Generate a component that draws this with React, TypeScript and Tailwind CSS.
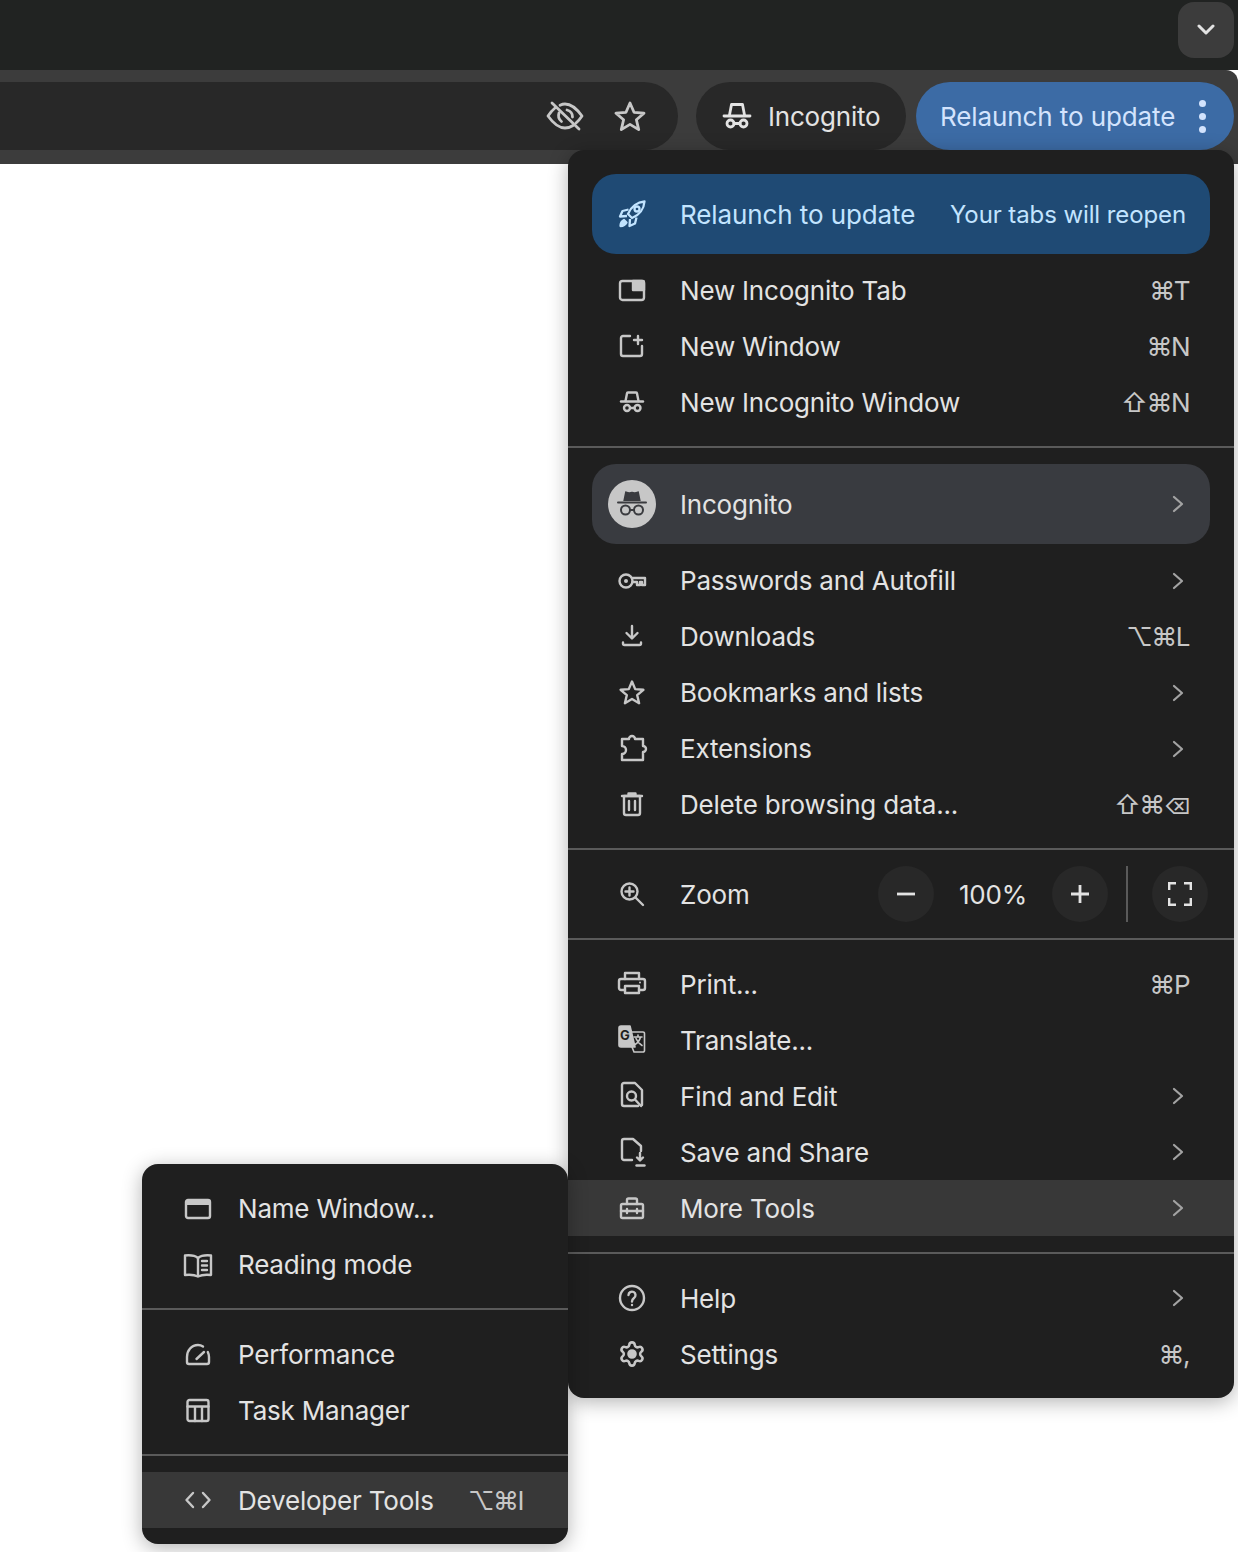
import React from 'react';
import { Settings } from 'lucide-react';

// All menu icons share a 28px box, 1 unit = 1 screenshot pixel
const Ico: React.FC<{ children: React.ReactNode; sw?: number }> = ({ children, sw = 2.4 }) => (
  <svg
    width="28"
    height="28"
    viewBox="0 0 28 28"
    fill="none"
    stroke="#c7c7c7"
    strokeWidth={sw}
    strokeLinecap="round"
    strokeLinejoin="round"
    className="shrink-0 overflow-visible"
  >
    {children}
  </svg>
);

const Chevron: React.FC<{ className?: string }> = ({ className }) => (
  <svg width="12" height="18" viewBox="0 0 12 18" fill="none" stroke="#a3a3a3" strokeWidth="2.200" strokeLinecap="round" strokeLinejoin="round" className={className}>
    <path d="M2 2l8 7-8 7" />
  </svg>
);

const icons: Record<string, React.ReactNode> = {
  newTab: (
    <Ico>
      <rect x="2" y="4" width="24" height="19" rx="2.500" />
      <path d="M15 4h10a1 1 0 0 1 1 1v8H15z" fill="#c7c7c7" />
    </Ico>
  ),
  newWindow: (
    <Ico>
      <path d="M12 3H5a2 2 0 0 0-2 2v16a2 2 0 0 0 2 2h17a2 2 0 0 0 2-2v-8" />
      <path d="M20 3v8M16 7h8" />
    </Ico>
  ),
  incognito: (
    <Ico>
      <path d="M7.500 12 9 4.500a1 1 0 0 1 1-1h8a1 1 0 0 1 1 1L20.500 12" />
      <path d="M3 12.500h22" />
      <circle cx="9" cy="19" r="3" />
      <circle cx="19.500" cy="19" r="3" />
      <path d="M12 19h4.500" />
    </Ico>
  ),
  key: (
    <Ico>
      <circle cx="8" cy="14" r="6.500" />
      <circle cx="8" cy="14" r="2" fill="#c7c7c7" stroke="none" />
      <path d="M14.500 11H27v7h-3v-3h-2v3h-3v-3h-4.500" />
    </Ico>
  ),
  download: (
    <Ico>
      <path d="M14 3v12M8.500 10l5.500 5.500 5.500-5.500" />
      <path d="M5 19.500v1a1.500 1.500 0 0 0 1.500 1.500h15a1.500 1.500 0 0 0 1.500-1.500v-1" />
    </Ico>
  ),
  star: (
    <Ico>
      <path d="M14 2.500l3.200 7.600 8.200.7-6.200 5.400 1.900 8-7.100-4.200-7.100 4.200 1.900-8-6.200-5.400 8.200-.7z" />
    </Ico>
  ),
  puzzle: (
    <Ico>
      <path d="M4 4h7a3 3 0 0 1 6 0h8v7a3 3 0 0 1 0 6v8H4v-6a4 4 0 0 0 0-8z" />
    </Ico>
  ),
  trash: (
    <Ico>
      <path d="M4 5h20M10.500 5V2.500h7V5" />
      <path d="M6 5v17a2 2 0 0 0 2 2h12a2 2 0 0 0 2-2V5z" />
      <path d="M11 10v9M17 10v9" />
    </Ico>
  ),
  zoom: (
    <Ico>
      <circle cx="11.500" cy="11.500" r="8" />
      <path d="M17.500 17.500 25 25M7.500 11.500h8M11.500 7.500v8" />
    </Ico>
  ),
  print: (
    <Ico>
      <path d="M7 9V3h14v6" />
      <path d="M7 20H3a2 2 0 0 1-2-2v-7a2 2 0 0 1 2-2h22a2 2 0 0 1 2 2v7a2 2 0 0 1-2 2h-4" />
      <path d="M7 16h14v7H7z" />
      <circle cx="22" cy="12.500" r="1" fill="#c7c7c7" stroke="none" />
    </Ico>
  ),
  translate: (
    <Ico sw={1.600}>
      <path d="M3 0h9l5 21H3a2 2 0 0 1-2-2V2a2 2 0 0 1 2-2z" fill="#c7c7c7" stroke="#c7c7c7" />
      <path d="M13 6h12a1.500 1.500 0 0 1 1.500 1.500V24.500A1.500 1.500 0 0 1 25 26H16l-2-5" />
      <text x="2" y="14" fontSize="13" fontWeight="700" fontFamily="Inter" fill="#1f1f1f" stroke="none">G</text>
      <path d="M16 11h8M20 9v2M22.500 11c-1 4-3 6-5.500 7.500M18 12.500c1 2.500 3 5 6 7" />
    </Ico>
  ),
  find: (
    <Ico>
      <path d="M24 23V8l-7-7H6a2 2 0 0 0-2 2v19a2 2 0 0 0 2 2h14" />
      <circle cx="13.500" cy="14" r="4.500" />
      <path d="M17 17.500l6 6.500" />
    </Ico>
  ),
  save: (
    <Ico>
      <path d="M14 22H6a2 2 0 0 1-2-2V3a2 2 0 0 1 2-2h9l8 7v5" />
      <path d="M22 15v7M19 19.500l3 3 3-3" />
      <path d="M18.500 27.500h8" />
    </Ico>
  ),
  tools: (
    <Ico>
      <path d="M9 10V6a1.500 1.500 0 0 1 1.500-1.500h7A1.500 1.500 0 0 1 19 6v4" />
      <rect x="3" y="10" width="22" height="14" rx="1.500" />
      <path d="M3 17h22M9 15v4M19 15v4" />
    </Ico>
  ),
  help: (
    <Ico>
      <circle cx="14" cy="14" r="12" />
      <path d="M10.500 11a3.500 3.500 0 1 1 5.500 3c-1.300 1-2 1.600-2 3.500" />
      <circle cx="14" cy="21" r="1.200" fill="#c7c7c7" stroke="none" />
    </Ico>
  ),
  window: (
    <Ico>
      <rect x="2" y="5" width="24" height="18" rx="2" />
      <path d="M2 8h24" strokeWidth="4" strokeLinecap="butt" />
    </Ico>
  ),
  book: (
    <Ico>
      <path d="M14 7C11 4.500 6 4 1 4.500V24c5-.5 10 0 13 1.500 3-1.500 8-2 13-1.500V4.500C22 4 17 4.500 14 7z" />
      <path d="M14 7v18M18 10h5M18 14.500h5M18 19h5" />
    </Ico>
  ),
  gauge: (
    <Ico>
      <path d="M19 5.500C17.500 4.500 15.800 4 14 4 7.500 4 3 9.500 3 16v5a2 2 0 0 0 2 2h18a2 2 0 0 0 2-2v-5c0-2-.5-3.500-1.200-5" />
      <path d="M12.500 18 20 11" />
    </Ico>
  ),
  table: (
    <Ico>
      <rect x="3.500" y="3" width="21" height="21" rx="2" />
      <path d="M3.500 9.500h21M11 9.500V24M18 9.500V24" />
    </Ico>
  ),
  code: (
    <Ico>
      <path d="M9 7l-6.500 7L9 21M19 7l6.500 7-6.500 7" />
    </Ico>
  ),
};

// low: rows on an even y sit one pixel lower in the screenshot (2x retina rounding)
type Item = { icon: React.ReactNode; label: string; keys?: React.ReactNode; sub?: boolean; on?: boolean; low?: boolean };

const Keys: React.FC<{ children: React.ReactNode; low?: boolean }> = ({ children, low }) => (
  <span className={`mr-[1px] tracking-[-1.5px] text-[#c7c7c7] ${low ? 'mt-[2px]' : ''}`}>{children}</span>
);

const Row: React.FC<Item> = ({ icon, label, keys, sub, on, low }) => (
  <div className={`flex h-14 items-center pl-[50px] pr-[44px] ${on ? 'bg-[#383838]' : ''}`}>
    {icon}
    <span className={`ml-[34px] flex-1 ${low ? 'mt-[2px]' : ''}`}>{label}</span>
    {keys && <Keys low={low}>{keys}</Keys>}
    {sub && <Chevron className="mr-[6px]" />}
  </div>
);

const SubRow: React.FC<Item> = ({ icon, label, keys, on, low }) => (
  <div className={`flex h-14 items-center pl-[42px] pr-[44px] ${on ? 'bg-[#383838]' : ''}`}>
    {icon}
    <span className={`ml-[26px] flex-1 ${low ? 'mt-[2px]' : ''}`}>{label}</span>
    {keys && <Keys low={low}>{keys}</Keys>}
  </div>
);

const Divider: React.FC<{ className?: string }> = ({ className }) => (
  <div className={`h-[2px] bg-[#5a5a5a] ${className ?? ''}`} />
);

const ZoomBtn: React.FC<{ children: React.ReactNode }> = ({ children }) => (
  <div className="flex h-14 w-14 items-center justify-center rounded-full bg-[#282828]">{children}</div>
);

export default function App() {
  return (
    <div className="relative h-[1552px] w-[1238px] overflow-hidden bg-white font-[Inter,'DejaVu_Sans',sans-serif] text-[26px] leading-[40px] font-[425] tracking-[-0.2px] text-[#e3e3e3]">
      {/* tab strip */}
      <div className="flex h-[70px] justify-end bg-[#212322] pr-1 pt-[2px]">
        <div className="flex h-14 w-14 items-center justify-center rounded-2xl bg-[#3c3c3c]">
          <svg width="18" height="12" viewBox="0 0 18 12" fill="none" stroke="#e3e3e3" strokeWidth="3" strokeLinecap="round" strokeLinejoin="round">
            <path d="M2 2l7 7 7-7" />
          </svg>
        </div>
      </div>

      {/* toolbar */}
      <div className="flex h-[94px] items-start rounded-tr-xl bg-[#3c3c3c] pr-1 pt-3">
        <div className="flex h-[68px] flex-1 items-center justify-end rounded-r-full bg-[#282828] pr-[32px]">
          <svg width="38" height="30" viewBox="0 0 38 30" fill="none" stroke="#c7c7c7" strokeWidth="2.800" strokeLinecap="round" strokeLinejoin="round">
            <path d="M9 7C6.500 9 4 12 2 15c5 7 10 12 17 12 3 0 5.500-.8 8-2.500M14 4.200C15.500 3.500 17 3 19 3c7 0 12 5 17 12-1.800 2.800-4 5.200-6 7" />
            <path d="M13 12c-1 3 0 6.500 2.500 8.500M21 9c3 .8 5.500 3.500 5.500 7" />
            <path d="M6 2l27 26" />
          </svg>
          <svg width="32" height="30" viewBox="0 0 32 30" fill="none" stroke="#c7c7c7" strokeWidth="2.800" strokeLinejoin="round" className="ml-[30px]">
            <path d="M16 2l4 9.300 10 .9-7.600 6.600 2.300 9.800L16 23.400l-8.700 5.200 2.300-9.800L2 12.200l10-.9z" />
          </svg>
        </div>
        <div className="ml-[18px] flex h-[68px] w-[210px] items-center rounded-full bg-[#282828] pl-[26px]">
          <svg width="30" height="28" viewBox="0 0 30 28" fill="none" stroke="#e3e3e3" strokeWidth="2.800" strokeLinecap="round" strokeLinejoin="round">
            <path d="M7.500 13 9.500 2.500h11L22.500 13" />
            <path d="M2 14h26" />
            <circle cx="8.500" cy="21.500" r="3.500" />
            <circle cx="21.500" cy="21.500" r="3.500" />
            <path d="M12 21.500h6" />
          </svg>
          <span className="ml-4 mt-[2px]">Incognito</span>
        </div>
        <div className="ml-[10px] flex h-[68px] w-[318px] items-center rounded-full bg-[#3c6ba5] pl-6 tracking-[-0.1px] text-[#d3e3fd]">
          <span className="mt-[2px] flex-1">Relaunch to update</span>
          <div className="mr-[28px] flex flex-col gap-[6px]">
            <div className="h-[7px] w-[7px] rounded-full bg-[#d3e3fd]" />
            <div className="h-[7px] w-[7px] rounded-full bg-[#d3e3fd]" />
            <div className="h-[7px] w-[7px] rounded-full bg-[#d3e3fd]" />
          </div>
        </div>
      </div>

      {/* main menu */}
      <div className="absolute left-[568px] top-[150px] w-[666px] rounded-2xl bg-[#1f1f1f] pb-4 pt-6 shadow-[0_4px_20px_rgba(0,0,0,0.3)]">
        <div className="mx-6 mb-[9px] flex h-20 items-center rounded-3xl bg-[#1f4a74] pl-[26px] pr-6 tracking-[-0.1px] text-[#c2e4ff]">
          <svg width="28" height="28" viewBox="0 0 28 28" fill="none" stroke="#c2e4ff" strokeWidth="2.300" strokeLinejoin="round" className="shrink-0">
            <path d="M26.500 1.500c-7 .5-13.500 5-16.500 12.500l4 4c7.500-3 12-9.500 12.500-16.500z" />
            <path d="M10.500 9.500 4.500 11 2 16.500l7-.5M18.500 17.500 17 23.500 11.500 26l.5-7" />
            <circle cx="19" cy="9" r="2.500" />
            <path d="M6 20c-2 1-3.500 3.500-3.500 6 2.500 0 5-1.500 6-3.500z" fill="#c2e4ff" />
          </svg>
          <span className="ml-[34px] mt-[2px] flex-1">Relaunch to update</span>
          <span className="mt-[2px] text-[24px] tracking-[-0.1px]">Your tabs will reopen</span>
        </div>

        <Row icon={icons.newTab} label="New Incognito Tab" keys="⌘T" />
        <Row icon={icons.newWindow} label="New Window" keys="⌘N" />
        <Row icon={icons.incognito} label="New Incognito Window" keys="⇧⌘N" />
        <Divider className="mb-4 mt-[15px]" />

        <div className="mx-6 mb-[9px] flex h-20 items-center rounded-3xl bg-[#393b40] pl-4 pr-[26px]">
          <div className="flex h-12 w-12 shrink-0 items-center justify-center rounded-full bg-[#c7c7c7]">
            <svg width="32" height="30" viewBox="0 0 32 30" fill="none" stroke="#3a3b3f" strokeWidth="2" strokeLinecap="round">
              <path d="M8.500 11 10 3.500c2 .8 4 1 6 .3 2 .7 4 .5 6-.3L23.500 11z" fill="#3a3b3f" />
              <path d="M2 13.500h28" />
              <circle cx="9.500" cy="21" r="4.500" />
              <circle cx="22.500" cy="21" r="4.500" />
              <path d="M14 21h4" />
            </svg>
          </div>
          <span className="ml-6 mt-[2px] flex-1">Incognito</span>
          <Chevron />
        </div>

        <Row icon={icons.key} label="Passwords and Autofill" sub />
        <Row icon={icons.download} label="Downloads" keys="⌥⌘L" />
        <Row icon={icons.star} label="Bookmarks and lists" sub />
        <Row icon={icons.puzzle} label="Extensions" sub />
        <Row icon={icons.trash} label="Delete browsing data..." keys={<>⇧⌘<span className="text-[22px]">⌫</span></>} />
        <Divider className="mb-4 mt-[15px]" />

        <div className="flex h-14 items-center pl-[50px] pr-[26px]">
          {icons.zoom}
          <span className="ml-[34px] mt-[2px] flex-1">Zoom</span>
          <ZoomBtn>
            <svg width="18" height="4" viewBox="0 0 18 4" stroke="#e3e3e3" strokeWidth="2.800"><path d="M0 2h18" /></svg>
          </ZoomBtn>
          <span className="mt-[2px] w-[118px] text-center">100%</span>
          <ZoomBtn>
            <svg width="18" height="18" viewBox="0 0 18 18" stroke="#e3e3e3" strokeWidth="2.800"><path d="M0 9h18M9 0v18" /></svg>
          </ZoomBtn>
          <div className="ml-[18px] mr-6 h-14 w-[2px] bg-[#5a5a5a]" />
          <ZoomBtn>
            <svg width="24" height="24" viewBox="0 0 24 24" fill="none" stroke="#e3e3e3" strokeWidth="2.800">
              <path d="M1 8V1h7M16 1h7v7M23 16v7h-7M8 23H1v-7" />
            </svg>
          </ZoomBtn>
        </div>
        <Divider className="mb-4 mt-4" />

        <Row icon={icons.print} label="Print..." keys="⌘P" low />
        <Row icon={icons.translate} label="Translate..." low />
        <Row icon={icons.find} label="Find and Edit" sub low />
        <Row icon={icons.save} label="Save and Share" sub low />
        <Row icon={icons.tools} label="More Tools" sub on low />
        <Divider className="mb-4 mt-4" />

        <Row icon={icons.help} label="Help" sub low />
        <Row icon={<Settings size={28} strokeWidth={2.200} className="shrink-0 text-[#c7c7c7] [&>circle]:fill-[#c7c7c7]" />} label="Settings" keys="⌘," low />
      </div>

      {/* more tools submenu */}
      <div className="absolute left-[142px] top-[1164px] w-[426px] rounded-2xl bg-[#1f1f1f] pb-4 pt-[17px] shadow-[0_4px_20px_rgba(0,0,0,0.3)]">
        <SubRow icon={icons.window} label="Name Window..." />
        <SubRow icon={icons.book} label="Reading mode" />
        <Divider className="mb-[17px] mt-[15px]" />
        <SubRow icon={icons.gauge} label="Performance" />
        <SubRow icon={icons.table} label="Task Manager" />
        <Divider className="mb-4 mt-[15px]" />
        <SubRow icon={icons.code} label="Developer Tools" keys="⌥⌘I" on low />
      </div>
    </div>
  );
}
